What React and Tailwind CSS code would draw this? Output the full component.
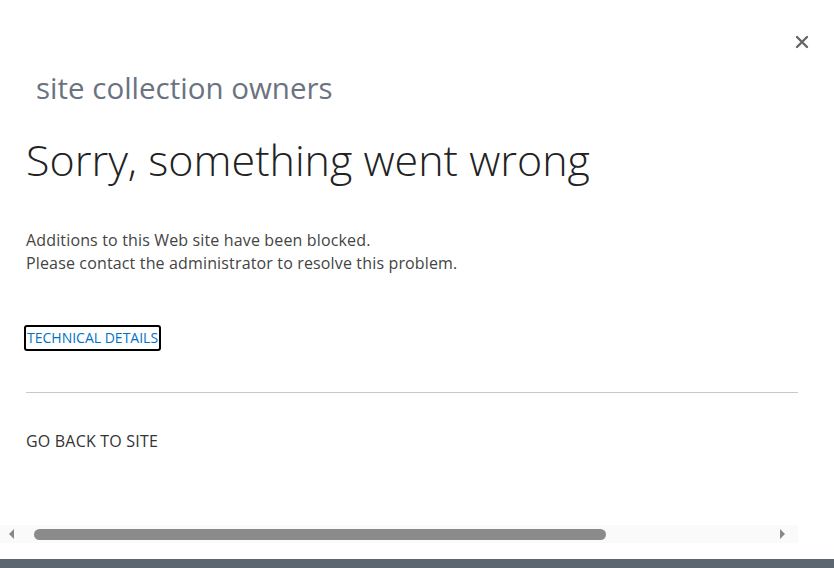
export default function App() {
  return (
    <div className="relative flex h-[568px] w-[834px] flex-col overflow-hidden bg-white font-['Open_Sans',sans-serif]">
      <button className="absolute right-[25px] top-[35px] text-[#666]" aria-label="Close">
        <svg width="14" height="14" viewBox="0 0 14 14">
          <path d="M2 2 L12 12 M12 2 L2 12" stroke="#666" strokeWidth="2.4" strokeLinecap="round" />
        </svg>
      </button>

      <div className="flex-1 pl-[26px] pr-[36px]">
        <div className="pl-[10px] pt-[68px] text-[29.5px] leading-[40px] text-[#6b7380]">
          site collection owners
        </div>
        <h1 className="mt-[24px] text-[43px] font-light leading-[56px] text-[#222]">
          Sorry, something went wrong
        </h1>
        <div className="mt-[41px] text-[16px] leading-[23px] tracking-[0.15px] text-[#444]">
          <p>Additions to this Web site have been blocked.</p>
          <p>Please contact the administrator to resolve this problem.</p>
        </div>
        <div className="mt-[50px]">
          <a
            href="#"
            className="-ml-[2px] inline-block rounded-[3px] border-2 border-black px-px text-[14px] leading-[20px] py-px text-[#0072c6]"
          >
            TECHNICAL DETAILS
          </a>
        </div>
        <div className="mt-[41px] border-t border-[#c8c8c8]" />
        <div className="mt-[38px] text-[16px] leading-[20px] tracking-[0.2px] text-[#333]">GO BACK TO SITE</div>
      </div>

      <div className="flex h-[18px] w-[798px] items-center bg-[#fafafa]">
        <svg width="34" height="18" viewBox="0 0 34 18">
          <path d="M14 4 L9 9 L14 14 Z" fill="#888" />
        </svg>
        <div className="h-[11px] w-[572px] rounded-full bg-[#8b8b8b]" />
        <div className="flex-1" />
        <svg width="22" height="18" viewBox="0 0 22 18">
          <path d="M4 4 L9 9 L4 14 Z" fill="#888" />
        </svg>
      </div>
      <div className="mt-[16px] h-[9px] w-full bg-[#5c6670]" />
    </div>
  );
}
